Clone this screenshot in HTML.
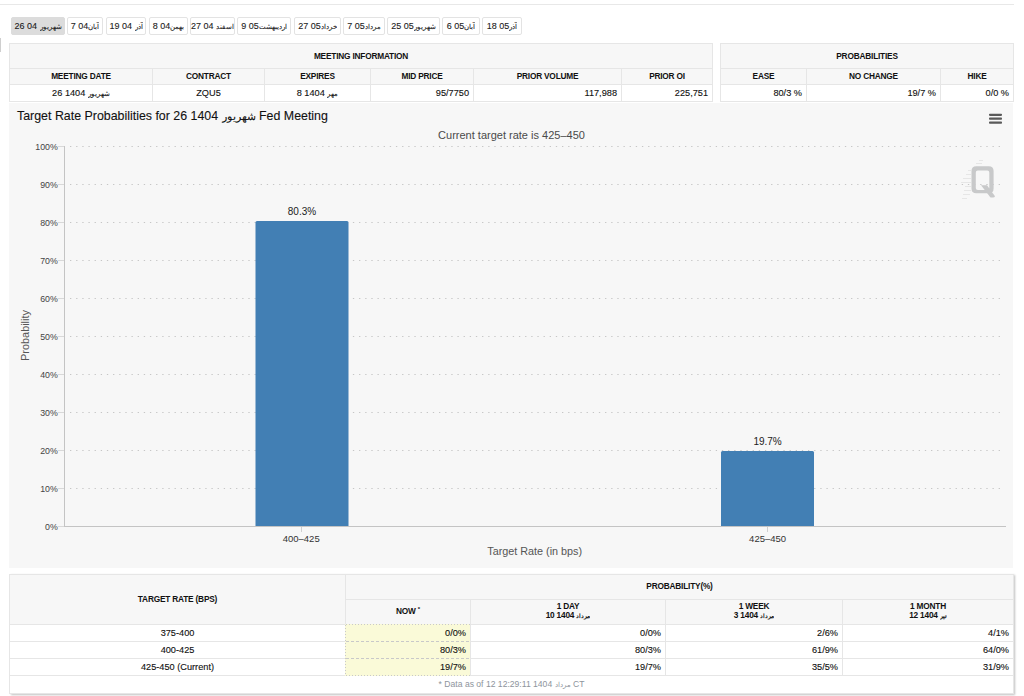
<!DOCTYPE html>
<html><head><meta charset="utf-8">
<style>
*{box-sizing:border-box;}
html,body{margin:0;padding:0;}
body{width:1024px;height:696px;overflow:hidden;position:relative;background:#fff;font-family:"Liberation Sans",sans-serif;color:#222;}
.abs{position:absolute;}
.topline{left:0;top:4px;width:1014px;height:1px;background:#e8e8e8;}
.lbar{left:0;top:38px;width:1px;height:14px;background:#cfcfcf;}
.tab{position:absolute;top:17px;height:18px;border:1px solid #e3e3e3;border-radius:2px;background:#fff;font-size:9px;line-height:16px;text-align:center;color:#222;white-space:nowrap;-webkit-text-stroke-width:0.1px;}
.ar{font-size:7px;display:inline-block;overflow:hidden;vertical-align:-3px;height:10px;line-height:10px;}
.tab.act{background:#dcdcdc;border-color:#dcdcdc;color:#1a1a1a;}
table{border-collapse:collapse;position:absolute;table-layout:fixed;}
td,th{padding:0 4px;overflow:hidden;white-space:nowrap;}
.mt,.bt{font-size:9.2px;}
.mt th,.bt th{background:#f7f7f7;font-weight:bold;font-size:8.3px;letter-spacing:-0.2px;color:#111;border:1px solid #e6e6e6;text-align:center;}
.mt td,.bt td{background:#fff;border:1px solid #e6e6e6;color:#111;-webkit-text-stroke-width:0.12px;}
.bt th{line-height:9px;}
.mt th,.bt th{padding-bottom:1px;}
.bt th .ar{font-size:6px;}
.chart{left:9px;top:103px;width:1004px;height:465px;background:#f7f7f7;}
.r{text-align:right;}
.c{text-align:center;}
.y{background:#fafad8 !important;}
sup{font-size:6px;vertical-align:top;position:relative;top:-2px;}
.shadow{left:10px;top:574px;width:1004px;height:120px;box-shadow:1px 1px 2px rgba(0,0,0,0.25);}
</style></head><body>
<div class="abs topline"></div>
<div class="abs lbar"></div>
<div class="tab act" style="left:11px;width:54px;">26 04 <span class="ar" style="width:22px">شهریور</span></div>
<div class="tab" style="left:67px;width:36px;">7 04<span class="ar" style="width:11px">آبان</span></div>
<div class="tab" style="left:106px;width:40px;">19 04 <span class="ar" style="width:8px">آذر</span></div>
<div class="tab" style="left:149px;width:39px;">8 04<span class="ar" style="width:14px">بهمن</span></div>
<div class="tab" style="left:190px;width:45px;">27 04 <span class="ar" style="width:18px">اسفند</span></div>
<div class="tab" style="left:237px;width:54px;">9 05<span class="ar" style="width:28px">اردیبهشت</span></div>
<div class="tab" style="left:294px;width:47px;">27 05<span class="ar" style="width:16px">خرداد</span></div>
<div class="tab" style="left:343px;width:42px;">7 05<span class="ar" style="width:16px">مرداد</span></div>
<div class="tab" style="left:387px;width:53px;">25 05<span class="ar" style="width:22px">شهریور</span></div>
<div class="tab" style="left:442px;width:38px;">6 05<span class="ar" style="width:11px">آبان</span></div>
<div class="tab" style="left:482px;width:40px;">18 05<span class="ar" style="width:8px">آذر</span></div>

<table class="mt" style="left:9px;top:43px;width:703px;">
<colgroup><col style="width:143px"><col style="width:112px"><col style="width:106px"><col style="width:103px"><col style="width:148px"><col style="width:91px"></colgroup>
<tr style="height:25px"><th colspan="6">MEETING INFORMATION</th></tr>
<tr style="height:16px"><th>MEETING DATE</th><th>CONTRACT</th><th>EXPIRES</th><th>MID PRICE</th><th>PRIOR VOLUME</th><th>PRIOR OI</th></tr>
<tr style="height:17px"><td class="c">26 1404 <span class="ar" style="width:22px">شهریور</span></td><td class="c">ZQU5</td><td class="c">8 1404 <span class="ar" style="width:11px">مهر</span></td><td class="r">95/7750</td><td class="r">117,988</td><td class="r">225,751</td></tr>
</table>

<table class="mt" style="left:720px;top:43px;width:293px;">
<colgroup><col style="width:86px"><col style="width:134px"><col style="width:73px"></colgroup>
<tr style="height:25px"><th colspan="3">PROBABILITIES</th></tr>
<tr style="height:16px"><th>EASE</th><th>NO CHANGE</th><th>HIKE</th></tr>
<tr style="height:17px"><td class="r">80/3 %</td><td class="r">19/7 %</td><td class="r">0/0 %</td></tr>
</table>

<div class="abs chart"></div>
<svg class="abs" style="left:0;top:0;" width="1024" height="696" viewBox="0 0 1024 696" font-family="Liberation Sans, sans-serif">
<line x1="70" y1="146.5" x2="1004" y2="146.5" stroke="#c6c6c6" stroke-width="1.2" stroke-dasharray="1.3 4.85"/>
<line x1="70" y1="184.5" x2="1004" y2="184.5" stroke="#c6c6c6" stroke-width="1.2" stroke-dasharray="1.3 4.85"/>
<line x1="70" y1="222.5" x2="1004" y2="222.5" stroke="#c6c6c6" stroke-width="1.2" stroke-dasharray="1.3 4.85"/>
<line x1="70" y1="260.5" x2="1004" y2="260.5" stroke="#c6c6c6" stroke-width="1.2" stroke-dasharray="1.3 4.85"/>
<line x1="70" y1="298.5" x2="1004" y2="298.5" stroke="#c6c6c6" stroke-width="1.2" stroke-dasharray="1.3 4.85"/>
<line x1="70" y1="336.5" x2="1004" y2="336.5" stroke="#c6c6c6" stroke-width="1.2" stroke-dasharray="1.3 4.85"/>
<line x1="70" y1="374.5" x2="1004" y2="374.5" stroke="#c6c6c6" stroke-width="1.2" stroke-dasharray="1.3 4.85"/>
<line x1="70" y1="412.5" x2="1004" y2="412.5" stroke="#c6c6c6" stroke-width="1.2" stroke-dasharray="1.3 4.85"/>
<line x1="70" y1="450.5" x2="1004" y2="450.5" stroke="#c6c6c6" stroke-width="1.2" stroke-dasharray="1.3 4.85"/>
<line x1="70" y1="488.5" x2="1004" y2="488.5" stroke="#c6c6c6" stroke-width="1.2" stroke-dasharray="1.3 4.85"/>
<line x1="58" y1="146.5" x2="64" y2="146.5" stroke="#d8d8d8"/>
<line x1="58" y1="184.5" x2="64" y2="184.5" stroke="#d8d8d8"/>
<line x1="58" y1="222.5" x2="64" y2="222.5" stroke="#d8d8d8"/>
<line x1="58" y1="260.5" x2="64" y2="260.5" stroke="#d8d8d8"/>
<line x1="58" y1="298.5" x2="64" y2="298.5" stroke="#d8d8d8"/>
<line x1="58" y1="336.5" x2="64" y2="336.5" stroke="#d8d8d8"/>
<line x1="58" y1="374.5" x2="64" y2="374.5" stroke="#d8d8d8"/>
<line x1="58" y1="412.5" x2="64" y2="412.5" stroke="#d8d8d8"/>
<line x1="58" y1="450.5" x2="64" y2="450.5" stroke="#d8d8d8"/>
<line x1="58" y1="488.5" x2="64" y2="488.5" stroke="#d8d8d8"/>
<line x1="58" y1="526.5" x2="64" y2="526.5" stroke="#d8d8d8"/>
<text x="57.8" y="149.9" text-anchor="end" font-size="8.8" fill="#444">100%</text>
<text x="57.8" y="187.9" text-anchor="end" font-size="8.8" fill="#444">90%</text>
<text x="57.8" y="225.9" text-anchor="end" font-size="8.8" fill="#444">80%</text>
<text x="57.8" y="263.9" text-anchor="end" font-size="8.8" fill="#444">70%</text>
<text x="57.8" y="301.9" text-anchor="end" font-size="8.8" fill="#444">60%</text>
<text x="57.8" y="339.9" text-anchor="end" font-size="8.8" fill="#444">50%</text>
<text x="57.8" y="377.9" text-anchor="end" font-size="8.8" fill="#444">40%</text>
<text x="57.8" y="415.9" text-anchor="end" font-size="8.8" fill="#444">30%</text>
<text x="57.8" y="453.9" text-anchor="end" font-size="8.8" fill="#444">20%</text>
<text x="57.8" y="491.9" text-anchor="end" font-size="8.8" fill="#444">10%</text>
<text x="57.8" y="529.9" text-anchor="end" font-size="8.8" fill="#444">0%</text>
<line x1="64.5" y1="146" x2="64.5" y2="526" stroke="#c4c4c4"/>
<line x1="64" y1="526.5" x2="1006" y2="526.5" stroke="#c4c4c4"/>
<line x1="301.5" y1="527" x2="301.5" y2="532" stroke="#d0d0d0"/>
<line x1="767.5" y1="527" x2="767.5" y2="532" stroke="#d0d0d0"/>
<path d="M255.5 526 V222.5 Q255.5 221 257 221 H347 Q348.5 221 348.5 222.5 V526 Z" fill="#427fb4"/>
<path d="M721 526 V452.5 Q721 451 722.5 451 H812.5 Q814 451 814 452.5 V526 Z" fill="#427fb4"/>
<text x="302" y="214.8" text-anchor="middle" font-size="10" fill="#222">80.3%</text>
<text x="767.6" y="445" text-anchor="middle" font-size="10" fill="#222">19.7%</text>
<text x="301.2" y="542.3" text-anchor="middle" font-size="9.5" fill="#333">400–425</text>
<text x="767.6" y="542.3" text-anchor="middle" font-size="9.5" fill="#333">425–450</text>
<text x="534.7" y="554.9" text-anchor="middle" font-size="10.8" fill="#555">Target Rate (in bps)</text>
<text transform="translate(28.5 335.5) rotate(-90)" text-anchor="middle" font-size="10.9" fill="#555">Probability</text>
<text x="17" y="120.3" font-size="12.4" fill="#111" stroke="#111" stroke-width="0.1">Target Rate Probabilities for 26 1404</text>
<svg x="221.55" y="104" width="34.03" height="20" overflow="hidden"><text x="0" y="16.3" font-size="10.5" fill="#111" stroke="#111" stroke-width="0.1">شهریور</text></svg>
<text x="259.02" y="120.3" font-size="12.4" fill="#111" stroke="#111" stroke-width="0.1">Fed Meeting</text>
<text x="511.5" y="138.9" text-anchor="middle" font-size="11" fill="#4a4a4a">Current target rate is 425–450</text>
<rect x="989" y="113.7" width="13" height="2.2" rx="0.8" fill="#5a5a5a"/>
<rect x="989" y="117.60000000000001" width="13" height="2.2" rx="0.8" fill="#5a5a5a"/>
<rect x="989" y="121.5" width="13" height="2.2" rx="0.8" fill="#5a5a5a"/>
<g stroke="#e6e6e6" stroke-width="1"><line x1="976" y1="163.5" x2="982" y2="163.5"/><line x1="979" y1="160.5" x2="983" y2="160.5"/><line x1="968" y1="170.5" x2="971" y2="170.5"/><line x1="966" y1="174.5" x2="971" y2="174.5"/><line x1="963" y1="178.5" x2="971" y2="178.5"/><line x1="961" y1="182.5" x2="971" y2="182.5"/><line x1="965" y1="186.5" x2="971" y2="186.5"/><line x1="964" y1="190.5" x2="971" y2="190.5"/><line x1="963" y1="194.5" x2="970" y2="194.5"/><line x1="962" y1="198.5" x2="967" y2="198.5"/></g>
<path fill-rule="evenodd" fill="#c8c9ca" d="M976.2 166.3 H988.9 Q993.6 166.3 993.6 171 V188.6 Q993.6 193.3 988.9 193.3 H976.2 Q971.5 193.3 971.5 188.6 V171 Q971.5 166.3 976.2 166.3 Z M977.8 170.6 H987.3 Q989.3 170.6 989.3 172.6 V187.9 Q989.3 189.9 987.3 189.9 H977.8 Q975.8 189.9 975.8 187.9 V172.6 Q975.8 170.6 977.8 170.6 Z"/>
<path fill="#c8c9ca" d="M981 185.3 H987 L995 196.2 Q994.5 197.6 993 197.6 H990.5 Z"/>
</svg>

<div class="abs shadow"></div>
<table class="bt" style="left:9px;top:574px;width:1004px;">
<colgroup><col style="width:336px"><col style="width:125px"><col style="width:195px"><col style="width:177px"><col style="width:171px"></colgroup>
<tr style="height:25px"><th rowspan="2">TARGET RATE (BPS)</th><th colspan="4">PROBABILITY(%)</th></tr>
<tr style="height:25px"><th>NOW <sup>*</sup></th><th>1 DAY<br>10 1404 <span class="ar" style="width:14px">مرداد</span></th><th>1 WEEK<br>3 1404 <span class="ar" style="width:14px">مرداد</span></th><th>1 MONTH<br>12 1404 <span class="ar" style="width:7px">تیر</span></th></tr>
<tr style="height:17px"><td class="c">375-400</td><td class="r y">0/0%</td><td class="r">0/0%</td><td class="r">2/6%</td><td class="r">4/1%</td></tr>
<tr style="height:17px"><td class="c">400-425</td><td class="r y">80/3%</td><td class="r">80/3%</td><td class="r">61/9%</td><td class="r">64/0%</td></tr>
<tr style="height:17px"><td class="c">425-450 (Current)</td><td class="r y">19/7%</td><td class="r">19/7%</td><td class="r">35/5%</td><td class="r">31/9%</td></tr>
<tr style="height:18px"><td colspan="5" class="c" style="color:#8e949c;font-size:8.6px;-webkit-text-stroke-width:0;padding-bottom:0px;">* Data as of 12 12:29:11 1404 <span class="ar" style="width:16px">مرداد</span> CT</td></tr>
</table>
<svg class="abs" style="left:0;top:0;" width="1024" height="696" viewBox="0 0 1024 696">
<g stroke="#fafad8" stroke-width="1"><line x1="346" y1="624.5" x2="470" y2="624.5"/><line x1="346" y1="641.5" x2="470" y2="641.5"/><line x1="346" y1="658.5" x2="470" y2="658.5"/><line x1="346" y1="675.5" x2="470" y2="675.5"/><line x1="345.5" y1="624" x2="345.5" y2="676"/></g>
<g stroke="#c9c9c9" stroke-width="1"><line x1="346" y1="624.5" x2="470" y2="624.5" stroke-dasharray="1 2"/><line x1="346" y1="641.5" x2="470" y2="641.5" stroke-dasharray="3 2"/><line x1="346" y1="658.5" x2="470" y2="658.5" stroke-dasharray="3 2"/><line x1="346" y1="675.5" x2="470" y2="675.5" stroke-dasharray="1 2"/><line x1="345.5" y1="625" x2="345.5" y2="676" stroke-dasharray="1 2"/></g>
</svg>
</body></html>
